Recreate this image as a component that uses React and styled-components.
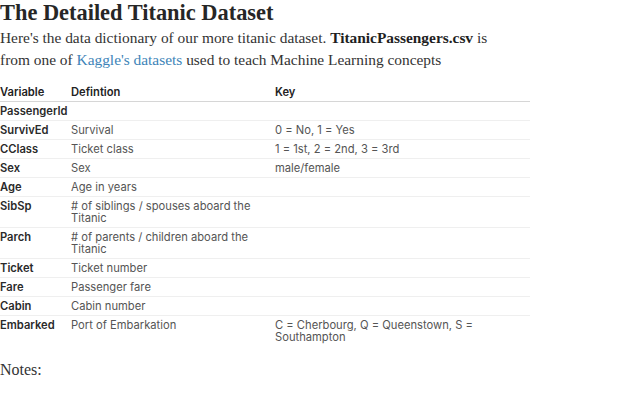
import React from "react";
import styled, { createGlobalStyle } from "styled-components";

const GlobalStyle = createGlobalStyle`
  body {
    margin: 0;
    background: #fff;
  }
`;

const rows = [
  { name: "PassengerId", def: "", key: "" },
  { name: "SurvivEd", def: "Survival", key: "0 = No, 1 = Yes" },
  { name: "CClass", def: "Ticket class", key: "1 = 1st, 2 = 2nd, 3 = 3rd" },
  { name: "Sex", def: "Sex", key: "male/female" },
  { name: "Age", def: "Age in years", key: "" },
  { name: "SibSp", def: "# of siblings / spouses aboard the Titanic", key: "" },
  { name: "Parch", def: "# of parents / children aboard the Titanic", key: "" },
  { name: "Ticket", def: "Ticket number", key: "" },
  { name: "Fare", def: "Passenger fare", key: "" },
  { name: "Cabin", def: "Cabin number", key: "" },
  {
    name: "Embarked",
    def: "Port of Embarkation",
    key: "C = Cherbourg, Q = Queenstown, S = Southampton",
  },
];

const App = () => {
  return (
    <Page>
      <GlobalStyle />
      <Title>The Detailed Titanic Dataset</Title>
      <Intro>
        Here's the data dictionary of our more titanic dataset.{" "}
        <strong>TitanicPassengers.csv</strong> is from one of{" "}
        <a href="#kaggle">Kaggle's datasets</a> used to teach Machine Learning
        concepts
      </Intro>
      <Table>
        <colgroup>
          <col style={{ width: 71 }} />
          <col style={{ width: 204 }} />
          <col style={{ width: 255 }} />
        </colgroup>
        <thead>
          <tr>
            <Th>Variable</Th>
            <Th>Defintion</Th>
            <Th>Key</Th>
          </tr>
        </thead>
        <tbody>
          {rows.map((r) => (
            <tr key={r.name}>
              <Td $strong>{r.name}</Td>
              <Td>{r.def}</Td>
              <Td>{r.key}</Td>
            </tr>
          ))}
        </tbody>
      </Table>
      <Notes>Notes:</Notes>
    </Page>
  );
};

const Page = styled.main`
  width: 640px;
  height: 400px;
  overflow: hidden;
  color: #2b2b2b;
`;

const Title = styled.h1`
  margin: 0;
  font-family: "Liberation Serif", serif;
  font-weight: 700;
  font-size: 22.4px;
  line-height: 25px;
  color: #262626;
`;

const Intro = styled.p`
  margin: 2px 0 0;
  width: 510px;
  font-family: "Liberation Serif", serif;
  font-size: 15.4px;
  line-height: 22px;
  color: #333;
  strong {
    color: #1f1f1f;
  }
  a {
    color: #3d84b8;
    text-decoration: none;
  }
`;

const Table = styled.table`
  margin-top: 11px;
  width: 530px;
  table-layout: fixed;
  border-collapse: collapse;
  font-family: Inter, "Liberation Sans", sans-serif;
  font-size: 11.2px;
  line-height: 12px;
`;

const Th = styled.th`
  text-align: left;
  font-weight: 600;
  color: #222;
  padding: 4px 8px 3px 0;
  border-bottom: 1px solid #d6d6d6;
`;

const Td = styled.td`
  vertical-align: top;
  padding: 3px 8px 3px 0;
  border-bottom: 1px solid #efefef;
  color: ${(p) => (p.$strong ? "#2a2a2a" : "#555")};
  font-weight: ${(p) => (p.$strong ? 600 : 400)};
  tr:last-child & {
    border-bottom: none;
  }
`;

const Notes = styled.p`
  margin: 15px 0 0;
  font-family: "Liberation Serif", serif;
  font-size: 16px;
  color: #333;
`;

export default App;
